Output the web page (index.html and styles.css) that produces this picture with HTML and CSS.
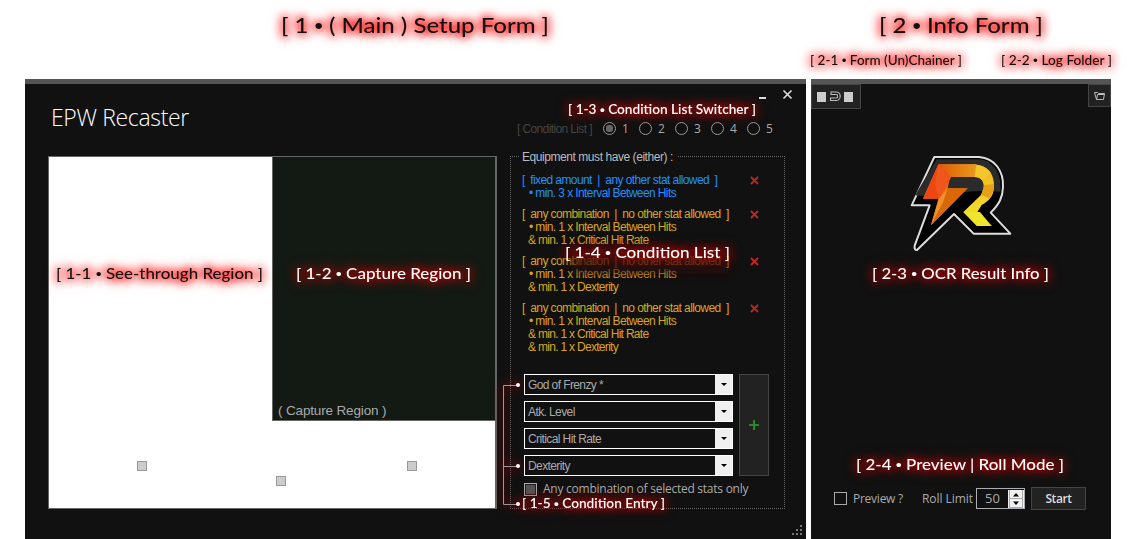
FILE: index.html
```html
<!DOCTYPE html>
<html lang="en">
<head>
<meta charset="utf-8">
<title>EPW Recaster</title>
<link rel="stylesheet" href="styles.css">
</head>
<body>
<main class="stage">
  <section class="form setup">
    <div class="left">
      <h1 class="title">EPW Recaster</h1>
      <div class="see-through">
        <div class="capture"><span>( Capture Region )</span></div>
        <i class="handle h1"></i><i class="handle h2"></i><i class="handle h3"></i>
      </div>
    </div>
    <div class="right">
      <div class="window-buttons">
        <svg width="36" height="12" viewBox="0 0 36 12"><path d="M1 9h7v2h-7z" fill="#ddd"/><path d="M25.500 2.500l8 8M33.500 2.500l-8 8" stroke="#ddd" stroke-width="1.700"/></svg>
      </div>
      <div class="switcher">
        <span class="switch-label">[ Condition List ]</span>
        <label><i class="radio on"></i>1</label><label><i class="radio"></i>2</label><label><i class="radio"></i>3</label><label><i class="radio"></i>4</label><label><i class="radio"></i>5</label>
      </div>
      <div class="group">
        <span class="legend">Equipment must have (either) :</span>
        <div class="conditions">
          <div class="cond blue"><div><p class="head fixed">[&nbsp; fixed amount &nbsp;|&nbsp; any other stat allowed &nbsp;]</p><p class="hits">• min. 3 x Interval Between Hits</p></div><svg class="del" width="9" height="9" viewBox="0 0 9 9"><path d="M1 1l7 7M8 1l-7 7"/></svg></div>
          <div class="cond"><div><p class="head">[&nbsp; any combination &nbsp;|&nbsp; no other stat allowed &nbsp;]</p><p class="hits">• min. 1 x Interval Between Hits</p><p class="crit">&amp; min. 1 x Critical Hit Rate</p></div><svg class="del" width="9" height="9" viewBox="0 0 9 9"><path d="M1 1l7 7M8 1l-7 7"/></svg></div>
          <div class="cond"><div><p class="head">[&nbsp; any combination &nbsp;|&nbsp; no other stat allowed &nbsp;]</p><p class="hits">• min. 1 x Interval Between Hits</p><p class="crit">&amp; min. 1 x Dexterity</p></div><svg class="del" width="9" height="9" viewBox="0 0 9 9"><path d="M1 1l7 7M8 1l-7 7"/></svg></div>
          <div class="cond"><div><p class="head">[&nbsp; any combination &nbsp;|&nbsp; no other stat allowed &nbsp;]</p><p class="hits">• min. 1 x Interval Between Hits</p><p class="crit">&amp; min. 1 x Critical Hit Rate</p><p class="crit">&amp; min. 1 x Dexterity</p></div><svg class="del" width="9" height="9" viewBox="0 0 9 9"><path d="M1 1l7 7M8 1l-7 7"/></svg></div>
        </div>
        <div class="entry">
          <div class="combos">
            <div class="combo"><span>God of Frenzy *</span><i></i></div>
            <div class="combo"><span>Atk. Level</span><i></i></div>
            <div class="combo"><span>Critical Hit Rate</span><i></i></div>
            <div class="combo"><span>Dexterity</span><i></i></div>
          </div>
          <div class="add"><svg width="10" height="10" viewBox="0 0 10 10"><path d="M0 5h10M5 0v10" stroke="#228b22" stroke-width="2"/></svg></div>
        </div>
        <div class="any"><i class="check filled"></i><span>Any combination of selected stats only</span></div>
      </div>
    </div>
    <svg class="grip" width="10" height="10" viewBox="0 0 10 10"><path d="M8 0h2v2h-2zM4 4h2v2h-2zM8 4h2v2h-2zM0 8h2v2h-2zM4 8h2v2h-2zM8 8h2v2h-2z" fill="#777"/></svg>
  </section>

  <section class="form info">
    <div class="toolbar">
      <div class="tool chain"><svg width="38" height="12" viewBox="0 0 38 12"><path d="M0 1h9v10h-9zM27 1h9v10h-9z" fill="#ccc"/><path d="M14 1h5a4 4 0 0 1 0 8.500h-5.500v-2.500h5.500a1.700 1.700 0 0 0 0-3.500h-5z" fill="none" stroke="#bbb" stroke-width="1.100"/></svg></div>
      <div class="tool folder"><svg width="12" height="10" viewBox="0 0 12 10"><path d="M2.500 8.500L.5 1.500h3l1 1h6l-1 6zM2.500 8.500l1-5h7" fill="none" stroke="#bbb"/></svg></div>
    </div>
    <svg class="logo" width="130" height="115" viewBox="0 0 390 345">
      <defs>
        <linearGradient id="bolt" x2="1" y2="1"><stop stop-color="#e84312"/><stop offset=".5" stop-color="#f07a12"/><stop offset="1" stop-color="#c65b00"/></linearGradient>
        <linearGradient id="bar"><stop stop-color="#e05a08"/><stop offset="1" stop-color="#e79a1c"/></linearGradient>
        <linearGradient id="bowl" x2="0" y2="1"><stop stop-color="#f0b51f"/><stop offset=".6" stop-color="#f5d22a"/><stop offset="1" stop-color="#f1ea16"/></linearGradient>
      </defs>
      <path d="M118 36H252C300 40 326 78 324 126C323 158 312 178 287 203L346 266H236L177 207L66 315Q57 315 59 302L104 181H50Z" fill="#000" stroke="#ddd" stroke-width="6" stroke-linejoin="round"/>
      <path d="M125 43H250C292 46 317 80 317 128L316 140Q250 134 190 145Q120 158 60 151Z" fill="#2b2b2b"/>
      <path d="M130 58H244L241 96H165L158 130H218L108 241L130 161H84Z" fill="url(#bolt)"/>
      <path d="M130 58H244L240 96H165Z" fill="url(#bar)"/>
      <path d="M130 58L84 161H132L168 97Z" fill="#ed4613"/>
      <path d="M130 58L120 120L132 161L168 97Z" fill="#f0551c"/>
      <path d="M132 161L158 130H218L108 241Z" fill="#d96805"/>
      <path d="M158 130L145 170L108 241L132 161Z" fill="#f1912c"/>
      <path d="M244 59C280 62 299 88 297 127C295 155 282 168 260 180L247 201L290 243H246L205 201L258 150C272 132 270 96 239 96Z" fill="url(#bowl)"/>
      <path d="M244 59C262 61 278 69 287 84L262 106Q255 96 239 96Z" fill="#f5c62b"/>
      <path d="M268 120L297 117C297 135 291 150 283 160L258 150Z" fill="#e99f1a"/>
      <path d="M205 201H255L290 243H246Z" fill="#eee52c"/>
    </svg>
    <div class="controls">
      <i class="check"></i><span class="preview">Preview ?</span><span class="limit">Roll Limit</span>
      <div class="spinner"><span>50</span><div class="arrows"><svg width="16" height="18" viewBox="0 0 16 18"><path d="M0 0h16v18h-16z" fill="#f0f0f0"/><path d="M1.500 0v17.500h13V0M1 8.500h14" fill="none" stroke="#aaa"/><path d="M5 6.500L8 3l3 3.500zM5 11.500h6L8 15z" fill="#000"/></svg></div></div>
      <div class="start">Start</div>
    </div>
  </section>
</main>

<svg class="notes" width="1136" height="539" viewBox="0 0 1136 539">
  <defs><filter id="soft" x="-20%" y="-60%" width="140%" height="220%"><feGaussianBlur stdDeviation="4"/></filter></defs>
  <rect x="572" y="249" width="156" height="25" fill="#2a0808" opacity=".7" filter="url(#soft)"/>
  <g class="on-light big">
    <text x="281" y="33" textLength="268" lengthAdjust="spacingAndGlyphs">[ 1 <tspan>•</tspan> ( Main ) Setup Form ]</text>
    <text x="879" y="33" textLength="164" lengthAdjust="spacingAndGlyphs">[ 2 <tspan>•</tspan> Info Form ]</text>
  </g>
  <g class="on-light small">
    <text x="810" y="64.500" textLength="152" lengthAdjust="spacingAndGlyphs">[ 2-1 <tspan>•</tspan> Form (Un)Chainer ]</text>
    <text x="1001" y="64.500" textLength="111" lengthAdjust="spacingAndGlyphs">[ 2-2 <tspan>•</tspan> Log Folder ]</text>
  </g>
  <g class="on-light mid"><text x="56" y="278.500" textLength="207" lengthAdjust="spacingAndGlyphs">[ 1-1 <tspan>•</tspan> See-through Region ]</text></g>
  <g class="on-dark mid">
    <text x="296" y="278.500" textLength="175" lengthAdjust="spacingAndGlyphs">[ 1-2 <tspan>•</tspan> Capture Region ]</text>
    <text x="565" y="257.500" textLength="165" lengthAdjust="spacingAndGlyphs">[ 1-4 <tspan>•</tspan> Condition List ]</text>
    <text x="872" y="278.500" textLength="177" lengthAdjust="spacingAndGlyphs">[ 2-3 <tspan>•</tspan> OCR Result Info ]</text>
    <text x="856" y="469.500" textLength="208" lengthAdjust="spacingAndGlyphs">[ 2-4 <tspan>•</tspan> Preview | Roll Mode ]</text>
  </g>
  <g class="on-dark compact">
    <text x="568" y="113.500" textLength="188" lengthAdjust="spacingAndGlyphs">[ 1-3 <tspan>•</tspan> Condition List Switcher ]</text>
    <text x="522" y="508" textLength="143" lengthAdjust="spacingAndGlyphs">[ 1-5 <tspan>•</tspan> Condition Entry ]</text>
  </g>
  <g class="link">
    <path d="M518 385.500H503.500V504.500H518M503.500 466.500H518" fill="none" stroke="#999"/>
    <circle cx="518" cy="385" r="2"/><circle cx="518" cy="466" r="2"/><circle cx="518" cy="504" r="2"/>
  </g>
</svg>
</body>
</html>
```
FILE: styles.css
```css
* { box-sizing: border-box; }
body { margin: 0; width: 1136px; height: 539px; overflow: hidden; background: #fff; font-family: "Liberation Sans", Arial, sans-serif; }
h1, p { margin: 0; font-weight: 400; }
i { display: block; font-style: normal; }
svg { display: block; flex: none; }
.stage { display: flex; gap: 5px; padding: 79px 25px 0; }
.form { height: 460px; background: #111; border-top: 5px solid #555; }
.setup { position: relative; display: flex; width: 781px; padding-left: 23px; gap: 13px; }
.left { width: 449px; }
.title { height: 72px; padding: 15px 0 0 3px; font: 300 23px/36px "Open Sans", sans-serif; letter-spacing: -.35px; color: #fff; white-space: nowrap; }
.see-through { position: relative; width: 449px; height: 353px; border: 1px solid #666; border-right-width: 2px; background: #fff; display: flex; justify-content: flex-end; align-items: flex-start; }
.capture { width: 223px; height: 264px; background: #131a13; border: solid #666; border-width: 0 0 1px 1px; display: flex; align-items: flex-end; padding: 0 0 2px 5px; font-size: 13.500px; line-height: 15px; letter-spacing: -.15px; color: #aaa; }
.handle { position: absolute; width: 10px; height: 10px; background: #ccc; border: 1px solid #999; }
.h1 { left: 88px; top: 304px; }
.h2 { left: 227px; top: 319px; }
.h3 { left: 358px; top: 304px; }
.right { width: 275px; display: flex; flex-direction: column; }
.window-buttons { height: 33px; display: flex; padding: 4px 0 0 248px; }
.switcher { height: 23px; margin-bottom: 16px; display: flex; align-items: center; padding-left: 7px; font: 12px "Open Sans", sans-serif; color: #aaa; }
.switch-label { width: 86px; font: 12px "Liberation Sans", sans-serif; letter-spacing: -.62px; color: #444; white-space: nowrap; }
.switcher label { width: 36px; display: flex; gap: 6px; align-items: center; }
.radio { width: 13px; height: 13px; border: 1px solid #999; border-radius: 50%; }
.radio.on { background: radial-gradient(circle, #666 0 3.500px, transparent 4px); }
.group { height: 353px; border: 1px dotted #666; padding-left: 11px; display: flex; flex-direction: column; }
.legend { align-self: flex-start; height: 14px; margin: -7px 0 10px -2px; padding: 0 4px 0 2px; background: #111; font-size: 12px; line-height: 14px; letter-spacing: -.44px; color: #bbb; white-space: nowrap; }
.conditions { height: 200px; display: flex; flex-direction: column; gap: 8px; color: #daa520; font-size: 12px; line-height: 13px; letter-spacing: -.6px; white-space: pre; }
.cond { display: flex; }
.cond > div { width: 228px; }
.cond p { height: 13px; }
.blue { color: #1e90ff; }
.head { letter-spacing: -.59px; }
.hits { padding-left: 7px; }
.crit { padding-left: 6px; letter-spacing: -.7px; }
.del { margin-top: 2px; fill: none; stroke: #c02424; stroke-width: 2; }
.entry { display: flex; gap: 6px; padding-left: 2px; }
.combos { display: flex; flex-direction: column; gap: 6px; }
.combo { width: 209px; height: 21px; border: 1px solid #fff; display: flex; justify-content: space-between; font-size: 12px; line-height: 20px; letter-spacing: -.6px; padding-left: 3px; color: #aaa; }
.combo i { width: 17px; background: #f0f0f0; display: flex; align-items: center; justify-content: center; }
.combo i::before { content: ""; border: solid transparent; border-width: 3px 3px 0; border-top-color: #000; }
.add { width: 30px; height: 102px; background: #222; border: 1px solid #444; display: flex; align-items: center; justify-content: center; }
.any { display: flex; align-items: center; gap: 6px; margin-top: 4px; padding-left: 2px; height: 18px; font: 12px/16px "Open Sans", sans-serif; color: #aaa; white-space: nowrap; letter-spacing: -.25px; }
.check { width: 13px; height: 13px; border: 1px solid #aaa; flex: none; }
.filled { background: #555; box-shadow: inset 0 0 0 1px #222; }
.grip { position: absolute; right: 4px; bottom: 4px; }
.info { width: 300px; }
.toolbar { display: flex; justify-content: space-between; align-items: flex-start; height: 61px; }
.tool { display: flex; border: 1px solid #444; background: #222; align-items: center; justify-content: center; }
.chain { width: 50px; height: 25px; }
.folder { width: 23px; height: 23px; }
.logo { margin-left: 84px; }
.controls { display: flex; align-items: center; height: 23px; margin-top: 227px; padding-left: 23px; font: 12px "Open Sans", sans-serif; color: #aaa; white-space: nowrap; }
.preview { width: 69px; margin-left: 6px; letter-spacing: -.25px; }
.limit { width: 54px; letter-spacing: -.05px; }
.spinner { display: flex; justify-content: space-between; align-items: center; width: 49px; height: 21px; border: 1px solid #abadb3; font-size: 13px; line-height: 17px; padding-left: 8px; }
.start { width: 55px; height: 23px; margin-left: 6px; border: 1px solid #444; background: #222; color: #ddd; font-weight: 600; line-height: 21px; text-align: center; letter-spacing: -.4px; }
.notes { position: absolute; left: 0; top: 0; font-family: Lato, sans-serif; font-weight: 500; }
.notes tspan { font-family: "Liberation Sans", sans-serif; }
.on-light { fill: #111; filter: drop-shadow(0 0 4px rgba(255,0,0,.8)) drop-shadow(0 0 5px rgba(255,0,0,.95)) drop-shadow(0 0 4px rgba(255,0,0,.3)); }
.on-dark { fill: #fff; filter: drop-shadow(0 0 4px rgba(190,0,0,.85)) drop-shadow(0 0 5px rgba(170,0,0,.95)) drop-shadow(0 0 4px rgba(150,0,0,.3)); }
.link { fill: #fff; filter: drop-shadow(0 0 4px rgba(200,0,0,.8)) drop-shadow(0 0 5px rgba(180,0,0,.5)); }
.big { font-size: 22px; font-weight: 500; }
.mid { font-size: 15.500px; }
.small { font-size: 12.500px; }
.compact { font-size: 13.500px; font-weight: 600; }
```
